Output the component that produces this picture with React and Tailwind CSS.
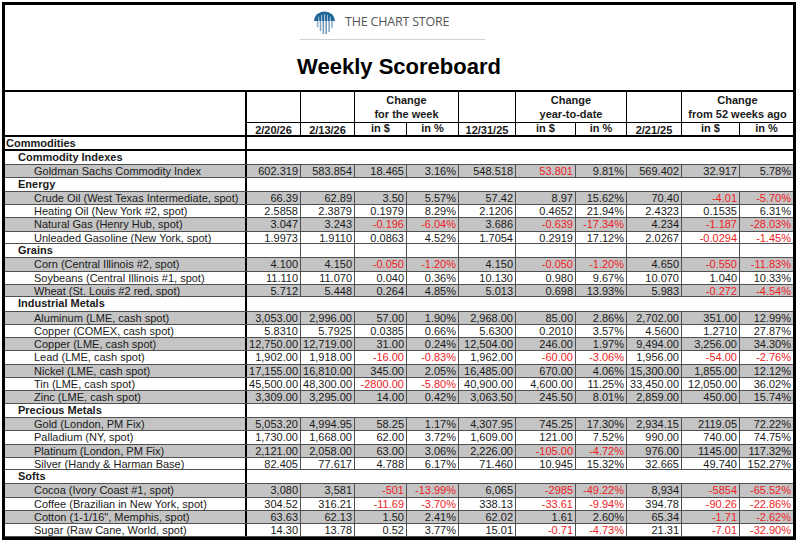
import React from "react";

const COLS = "grid grid-cols-[242px_53px_54px_52px_52px_57px_60px_51px_55px_58px_54px]";

const sections = [
  {
    name: "Commodity Indexes",
    rows: [
      { label: "Goldman Sachs Commodity Index", v: ["602.319", "583.854", "18.465", "3.16%", "548.518", "53.801", "9.81%", "569.402", "32.917", "5.78%"], red: [5] },
    ],
  },
  {
    name: "Energy",
    rows: [
      { label: "Crude Oil (West Texas Intermediate, spot)", v: ["66.39", "62.89", "3.50", "5.57%", "57.42", "8.97", "15.62%", "70.40", "-4.01", "-5.70%"] },
      { label: "Heating Oil (New York #2, spot)", v: ["2.5858", "2.3879", "0.1979", "8.29%", "2.1206", "0.4652", "21.94%", "2.4323", "0.1535", "6.31%"] },
      { label: "Natural Gas (Henry Hub, spot)", v: ["3.047", "3.243", "-0.196", "-6.04%", "3.686", "-0.639", "-17.34%", "4.234", "-1.187", "-28.03%"] },
      { label: "Unleaded Gasoline (New York, spot)", v: ["1.9973", "1.9110", "0.0863", "4.52%", "1.7054", "0.2919", "17.12%", "2.0267", "-0.0294", "-1.45%"] },
    ],
  },
  {
    name: "Grains",
    lines: true,
    rows: [
      { label: "Corn (Central Illinois #2, spot)", v: ["4.100", "4.150", "-0.050", "-1.20%", "4.150", "-0.050", "-1.20%", "4.650", "-0.550", "-11.83%"] },
      { label: "Soybeans (Central Illinois #1, spot)", v: ["11.110", "11.070", "0.040", "0.36%", "10.130", "0.980", "9.67%", "10.070", "1.040", "10.33%"] },
      { label: "Wheat (St. Louis #2 red, spot)", v: ["5.712", "5.448", "0.264", "4.85%", "5.013", "0.698", "13.93%", "5.983", "-0.272", "-4.54%"] },
    ],
  },
  {
    name: "Industrial Metals",
    rows: [
      { label: "Aluminum (LME, cash spot)", v: ["3,053.00", "2,996.00", "57.00", "1.90%", "2,968.00", "85.00", "2.86%", "2,702.00", "351.00", "12.99%"] },
      { label: "Copper (COMEX, cash spot)", v: ["5.8310", "5.7925", "0.0385", "0.66%", "5.6300", "0.2010", "3.57%", "4.5600", "1.2710", "27.87%"] },
      { label: "Copper (LME, cash spot)", v: ["12,750.00", "12,719.00", "31.00", "0.24%", "12,504.00", "246.00", "1.97%", "9,494.00", "3,256.00", "34.30%"] },
      { label: "Lead (LME, cash spot)", v: ["1,902.00", "1,918.00", "-16.00", "-0.83%", "1,962.00", "-60.00", "-3.06%", "1,956.00", "-54.00", "-2.76%"] },
      { label: "Nickel (LME, cash spot)", v: ["17,155.00", "16,810.00", "345.00", "2.05%", "16,485.00", "670.00", "4.06%", "15,300.00", "1,855.00", "12.12%"] },
      { label: "Tin (LME, cash spot)", v: ["45,500.00", "48,300.00", "-2800.00", "-5.80%", "40,900.00", "4,600.00", "11.25%", "33,450.00", "12,050.00", "36.02%"] },
      { label: "Zinc (LME, cash spot)", v: ["3,309.00", "3,295.00", "14.00", "0.42%", "3,063.50", "245.50", "8.01%", "2,859.00", "450.00", "15.74%"] },
    ],
  },
  {
    name: "Precious Metals",
    rows: [
      { label: "Gold (London, PM Fix)", v: ["5,053.20", "4,994.95", "58.25", "1.17%", "4,307.95", "745.25", "17.30%", "2,934.15", "2119.05", "72.22%"] },
      { label: "Palladium (NY, spot)", v: ["1,730.00", "1,668.00", "62.00", "3.72%", "1,609.00", "121.00", "7.52%", "990.00", "740.00", "74.75%"] },
      { label: "Platinum (London, PM Fix)", v: ["2,121.00", "2,058.00", "63.00", "3.06%", "2,226.00", "-105.00", "-4.72%", "976.00", "1145.00", "117.32%"] },
      { label: "Silver (Handy & Harman Base)", v: ["82.405", "77.617", "4.788", "6.17%", "71.460", "10.945", "15.32%", "32.665", "49.740", "152.27%"] },
    ],
  },
  {
    name: "Softs",
    rows: [
      { label: "Cocoa (Ivory Coast #1, spot)", v: ["3,080", "3,581", "-501", "-13.99%", "6,065", "-2985", "-49.22%", "8,934", "-5854", "-65.52%"] },
      { label: "Coffee (Brazilian in New York, spot)", v: ["304.52", "316.21", "-11.69", "-3.70%", "338.13", "-33.61", "-9.94%", "394.78", "-90.26", "-22.86%"] },
      { label: "Cotton (1-1/16\", Memphis, spot)", v: ["63.63", "62.13", "1.50", "2.41%", "62.02", "1.61", "2.60%", "65.34", "-1.71", "-2.62%"] },
      { label: "Sugar (Raw Cane, World, spot)", v: ["14.30", "13.78", "0.52", "3.77%", "15.01", "-0.71", "-4.73%", "21.31", "-7.01", "-32.90%"] },
    ],
  },
];

const Logo = () => (
  <svg width="23" height="23" viewBox="0 0 24 24">
    <rect x="4" y="9" width="1.6" height="8" fill="#8fb0c8" />
    <rect x="7" y="9" width="1.6" height="12" fill="#7ea3bf" />
    <rect x="10" y="9" width="1.6" height="15" fill="#6f98b8" />
    <rect x="13" y="9" width="1.6" height="15" fill="#6f98b8" />
    <rect x="16" y="9" width="1.6" height="13" fill="#7ea3bf" />
    <rect x="19" y="9" width="1.6" height="9" fill="#8fb0c8" />
    <path d="M1 10.5 A11 10 0 0 1 23 10.5 Z" fill="#1d6697" />
    <path d="M6 10.5 V6 M9 10.5 V4 M12 10.5 V3.5 M15 10.5 V4 M18 10.5 V6" stroke="#ffffff" strokeWidth="0.7" />
  </svg>
);

const HeaderCell = ({ className = "", children }) => (
  <div className={`flex flex-col items-center font-bold leading-[14px] ${className}`}>{children}</div>
);

const ItemRow = ({ row, gray, last }) => (
  <div className={`${COLS} h-[13.3px] border-t border-[#505050] ${last ? "border-b" : ""} ${gray ? "bg-[#c4c4c4]" : "bg-white"}`}>
    <div className="border-r-2 border-black pl-[29px] leading-[12px] whitespace-nowrap overflow-hidden">{row.label}</div>
    {row.v.map((val, i) => {
      const red = val.startsWith("-") || (row.red && row.red.includes(i));
      return (
        <div
          key={i}
          className={`text-right pr-[2px] leading-[12px] whitespace-nowrap ${i > 0 ? "border-l border-[#505050]" : ""} ${red ? "text-[#ee1c24]" : ""}`}
        >
          {val}
        </div>
      );
    })}
  </div>
);

const CategoryRow = ({ name, lines }) => (
  <div className={`${COLS} h-[13.3px] bg-white`}>
    <div className="border-r-2 border-black pl-[13px] font-bold leading-[13px]">{name}</div>
    {Array.from({ length: 10 }).map((_, i) => (
      <div key={i} className={lines && i > 0 ? "border-l border-[#505050]" : ""} />
    ))}
  </div>
);

export default function App() {
  return (
    <div className="w-[800px] h-[543px] bg-white pt-[2px] pl-[2px] text-[11px] text-[#1a1a1a] [font-family:'Liberation_Sans',Arial,sans-serif]">
      <div className="w-[794px] border-[3px] border-black">
        {/* title block */}
        <div className="h-[87px] border-b-2 border-black">
          <div className="ml-[295px] w-[185px] pt-[5px]">
            <div className="flex items-center gap-[9px] pl-[13px] h-[24px]">
              <Logo />
              <span className="text-[12.5px] text-[#555] tracking-[-0.2px] [font-family:'Open_Sans',sans-serif]">THE CHART STORE</span>
            </div>
            <div className="mt-[5px] h-px bg-[#d0d0d0]" />
          </div>
          <div className="mt-[14px] text-center text-[22px] font-bold leading-[26px] text-black">Weekly Scoreboard</div>
        </div>

        {/* column headers */}
        <div className={`${COLS} grid-rows-[15px_15px_13px] border-b-2 border-black`}>
          <div className="row-span-3 border-r-2 border-black" />
          <div className="row-span-2" />
          <div className="row-span-2 border-l border-black" />
          <HeaderCell className="col-span-2 row-span-2 border-l border-black pt-px">
            <span>Change</span>
            <span>for the week</span>
          </HeaderCell>
          <div className="row-span-2 border-l border-black" />
          <HeaderCell className="col-span-2 row-span-2 border-l border-black pt-px">
            <span>Change</span>
            <span>year-to-date</span>
          </HeaderCell>
          <div className="row-span-2 border-l border-black" />
          <HeaderCell className="col-span-2 row-span-2 border-l border-black pt-px">
            <span>Change</span>
            <span>from 52 weeks ago</span>
          </HeaderCell>
          {["2/20/26", "2/13/26", "in $", "in %", "12/31/25", "in $", "in %", "2/21/25", "in $", "in %"].map((t, i) => (
            <div
              key={i}
              className={`border-t border-black text-center font-bold ${t.startsWith("in") ? "leading-[10px]" : "leading-[14px]"} ${i > 0 ? "border-l" : ""}`}
            >
              {t}
            </div>
          ))}
        </div>

        {/* commodities heading */}
        <div className={`${COLS} h-[14px] border-b-2 border-black`}>
          <div className="border-r-2 border-black pl-px font-bold leading-[12px]">Commodities</div>
        </div>

        {/* body */}
        {sections.map((s) => (
          <React.Fragment key={s.name}>
            <CategoryRow name={s.name} lines={s.lines} />
            {s.rows.map((r, i) => (
              <ItemRow key={r.label} row={r} gray={i % 2 === 0} last={i === s.rows.length - 1} />
            ))}
          </React.Fragment>
        ))}
      </div>
    </div>
  );
}
